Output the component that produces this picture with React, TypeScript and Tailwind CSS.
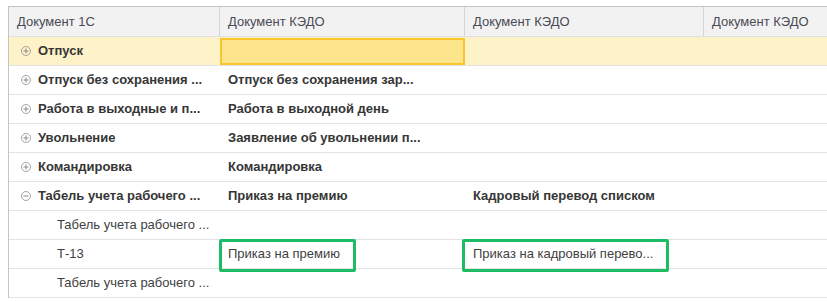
import React from "react";

type Row = {
    level: 0 | 1;
    icon?: "plus" | "minus";
    cols: string[];
    active?: boolean;
};

const rows: Row[] = [
    { level: 0, icon: "plus", cols: ["Отпуск", "", "", ""], active: true },
    { level: 0, icon: "plus", cols: ["Отпуск без сохранения ...", "Отпуск без сохранения зар...", "", ""] },
    { level: 0, icon: "plus", cols: ["Работа в выходные и п...", "Работа в выходной день", "", ""] },
    { level: 0, icon: "plus", cols: ["Увольнение", "Заявление об увольнении п...", "", ""] },
    { level: 0, icon: "plus", cols: ["Командировка", "Командировка", "", ""] },
    { level: 0, icon: "minus", cols: ["Табель учета рабочего ...", "Приказ на премию", "Кадровый перевод списком", ""] },
    { level: 1, cols: ["Табель учета рабочего ...", "", "", ""] },
    { level: 1, cols: ["Т-13", "Приказ на премию", "Приказ на кадровый перево...", ""] },
    { level: 1, cols: ["Табель учета рабочего ...", "", "", ""] },
];

const gridCols = "grid grid-cols-[211px_245px_239px_1fr]";

function TreeIcon({ kind }: { kind: "plus" | "minus" }) {
    return (
        <svg width="10" height="10" viewBox="0 0 10 10" className="shrink-0">
            <circle cx="5" cy="5" r="4.5" fill="none" stroke="#a3a3a3" strokeWidth="1" />
            <line x1="2.5" y1="5" x2="7.5" y2="5" stroke="#8a8a8a" strokeWidth="1" />
            {kind === "plus" && <line x1="5" y1="2.5" x2="5" y2="7.5" stroke="#8a8a8a" strokeWidth="1" />}
        </svg>
    );
}

export default function App() {
    return (
        <div
            className="relative w-[827px] h-[302px] bg-white overflow-hidden pt-[6px] pl-2 text-[13px]"
            style={{ fontFamily: '"Liberation Sans", Arial, sans-serif' }}
        >
            <div className="border-t border-l border-[#c4c4c4]">
                {/* header */}
                <div className={`${gridCols} h-[30px] bg-[#f2f2f2] border-b border-[#dedede] text-[#4a4a55]`}>
                    {["Документ 1С", "Документ КЭДО", "Документ КЭДО", "Документ КЭДО"].map((h, i) => (
                        <div
                            key={i}
                            className={`flex items-center whitespace-nowrap overflow-hidden pl-[8px] ${i < 3 ? "border-r border-[#d6d6d6]" : ""}`}
                        >
                            {h}
                        </div>
                    ))}
                </div>

                {rows.map((r, ri) => (
                    <div
                        key={ri}
                        className={`${gridCols} h-[29px] border-b border-[#e3e3e3] ${r.active ? "bg-[#fef2c8]" : "bg-white"} ${r.level === 0 ? "font-bold text-[#363636]" : "text-[#3f3f3f]"}`}
                    >
                        <div className="flex items-center whitespace-nowrap overflow-hidden">
                            {r.level === 0 ? (
                                <div className="flex items-center pl-[12px] gap-[7px]">
                                    <TreeIcon kind={r.icon!} />
                                    <span>{r.cols[0]}</span>
                                </div>
                            ) : (
                                <span className="pl-[48px]">{r.cols[0]}</span>
                            )}
                        </div>
                        {r.active ? (
                            <div className="mt-px border-2 border-[#fbc62c] bg-[#fde58e]" />
                        ) : (
                            <div className="flex items-center whitespace-nowrap overflow-hidden pl-[8px]">{r.cols[1]}</div>
                        )}
                        <div className="flex items-center whitespace-nowrap overflow-hidden pl-[8px]">{r.cols[2]}</div>
                        <div className="flex items-center whitespace-nowrap overflow-hidden pl-[8px]">{r.cols[3]}</div>
                    </div>
                ))}
            </div>

            {/* highlight frames */}
            <div className="absolute left-[219px] top-[239px] w-[137px] h-[33px] border-[3px] border-[#1dbb64] rounded-[2px]" />
            <div className="absolute left-[462px] top-[239px] w-[207px] h-[33px] border-[3px] border-[#1dbb64] rounded-[2px]" />
        </div>
    );
}
